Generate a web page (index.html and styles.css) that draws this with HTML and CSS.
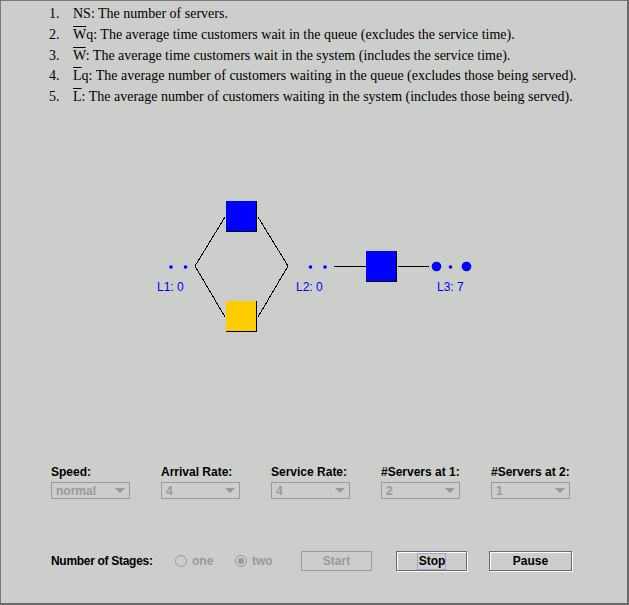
FILE: index.html
```html
<!DOCTYPE html>
<html>
<head>
<meta charset="utf-8">
<link rel="stylesheet" href="styles.css">
</head>
<body>
<div class="frame">
  <ol class="defs">
    <li><span class="num">1.</span><span class="txt">NS: The number of servers.</span></li>
    <li><span class="num">2.</span><span class="txt"><span class="ov">W</span>q: The average time customers wait in the queue (excludes the service time).</span></li>
    <li><span class="num">3.</span><span class="txt"><span class="ov">W</span>: The average time customers wait in the system (includes the service time).</span></li>
    <li><span class="num">4.</span><span class="txt"><span class="ov">L</span>q: The average number of customers waiting in the queue (excludes those being served).</span></li>
    <li><span class="num">5.</span><span class="txt"><span class="ov">L</span>: The average number of customers waiting in the system (includes those being served).</span></li>
  </ol>

  <svg class="diagram" width="627" height="240" viewBox="1 110 627 240" xmlns="http://www.w3.org/2000/svg">
    <g stroke="#000" stroke-width="1" shape-rendering="crispEdges" fill="none">
      <polyline points="225,217 195,266 225,317"/>
      <polyline points="258,217 288,266 258,317"/>
      <line x1="334" y1="266.5" x2="366" y2="266.5"/>
      <line x1="398" y1="266.5" x2="429" y2="266.5"/>
    </g>
    <g shape-rendering="crispEdges">
      <rect x="226" y="201" width="31" height="31" fill="#000"/>
      <rect x="226" y="201" width="30" height="30" fill="#0000ff"/>
      <rect x="226" y="301" width="31" height="31" fill="#000"/>
      <rect x="226" y="301" width="30" height="30" fill="#ffcc00"/>
      <rect x="366" y="251" width="31" height="31" fill="#000"/>
      <rect x="366" y="251" width="30" height="30" fill="#0000ff"/>
    </g>
    <g fill="#0000ff">
      <circle cx="171" cy="267" r="1.8"/>
      <circle cx="185.5" cy="267" r="1.8"/>
      <circle cx="310.5" cy="267" r="1.8"/>
      <circle cx="325" cy="267" r="1.8"/>
      <circle cx="436.5" cy="266.5" r="4.8"/>
      <circle cx="450.5" cy="267" r="1.8"/>
      <circle cx="466.5" cy="266.5" r="4.8"/>
    </g>
    <g class="lbl" fill="#0000ff">
      <text x="157" y="291">L1: 0</text>
      <text x="296" y="291">L2: 0</text>
      <text x="437" y="291">L3: 7</text>
    </g>
  </svg>

  <div class="params">
    <div class="param">
      <div class="plabel">Speed:</div>
      <div class="combo"><span>normal</span><i class="arrow"></i></div>
    </div>
    <div class="param">
      <div class="plabel">Arrival Rate:</div>
      <div class="combo"><span>4</span><i class="arrow"></i></div>
    </div>
    <div class="param">
      <div class="plabel">Service Rate:</div>
      <div class="combo"><span>4</span><i class="arrow"></i></div>
    </div>
    <div class="param">
      <div class="plabel">#Servers at 1:</div>
      <div class="combo"><span>2</span><i class="arrow"></i></div>
    </div>
    <div class="param">
      <div class="plabel">#Servers at 2:</div>
      <div class="combo"><span>1</span><i class="arrow"></i></div>
    </div>
  </div>

  <div class="stages">
    <div class="slabel">Number of Stages:</div>
    <div class="radio"><i class="circle"></i><span>one</span></div>
    <div class="radio two"><i class="circle on"></i><span>two</span></div>
    <div class="btn disabled start">Start</div>
    <div class="btn stop"><span class="focus">Stop</span></div>
    <div class="btn pause">Pause</div>
  </div>
</div>
</body>
</html>
```

FILE: styles.css
```css
html, body {
  margin: 0;
  padding: 0;
  background: #cccecb;
}

.frame {
  width: 629px;
  height: 605px;
  box-sizing: border-box;
  background: #cccecb;
  border-top: 1px solid #7a7a7a;
  border-left: 1px solid #7a7a7a;
  border-right: 2px solid #6a6a6a;
  border-bottom: 2px solid #6a6a6a;
  overflow: hidden;
}

.defs {
  list-style: none;
  margin: 0;
  padding: 3px 0 0 48px;
  height: 109px;
  box-sizing: border-box;
  font-family: "Liberation Serif", "Times New Roman", serif;
  font-size: 14px;
  color: #000;
}

.defs li {
  display: flex;
  height: 20.75px;
  line-height: 20.75px;
  white-space: nowrap;
}

.num {
  width: 24px;
  flex: none;
}

.ov {
  text-decoration: overline;
}

.diagram {
  display: block;
}

.lbl text {
  font-family: "Liberation Sans", Arial, sans-serif;
  font-size: 12px;
}

.params {
  display: flex;
  padding: 115px 0 0 50px;
  font-family: "Liberation Sans", Arial, sans-serif;
  font-size: 12px;
}

.param {
  width: 110px;
  flex: none;
}

.plabel {
  font-weight: bold;
  color: #000;
  height: 15px;
  line-height: 15px;
  margin-bottom: 2px;
}

.combo {
  width: 79px;
  height: 17px;
  box-sizing: border-box;
  border: 1px solid #9a9a9a;
  display: flex;
  align-items: center;
  justify-content: space-between;
  padding: 0 3px 0 4px;
  color: #999999;
  font-weight: bold;
}

.arrow {
  width: 0;
  height: 0;
  border-left: 5px solid transparent;
  border-right: 5px solid transparent;
  border-top: 5px solid #999999;
  margin-right: 1px;
}

.stages {
  display: flex;
  align-items: center;
  padding: 52px 0 0 50px;
  height: 20px;
  font-family: "Liberation Sans", Arial, sans-serif;
  font-size: 12px;
  font-weight: bold;
}

.slabel {
  width: 124px;
  flex: none;
  color: #000;
  letter-spacing: -0.3px;
}

.radio {
  display: flex;
  align-items: center;
  color: #999999;
  width: 60px;
  flex: none;
}

.circle {
  width: 12px;
  height: 12px;
  box-sizing: border-box;
  border: 1px solid #999999;
  border-radius: 50%;
  margin-right: 5px;
  position: relative;
  background: #cccecb;
}

.circle.on::after {
  content: "";
  position: absolute;
  left: 2px;
  top: 2px;
  width: 6px;
  height: 6px;
  border-radius: 50%;
  background: #999999;
}

.btn {
  height: 20px;
  box-sizing: border-box;
  display: flex;
  align-items: center;
  justify-content: center;
  flex: none;
  color: #000;
  border: 1px solid #6b6b6b;
  box-shadow: 1px 1px 0 #ffffff, inset 1px 1px 0 #ffffff;
}

.btn.disabled {
  color: #999999;
  border-color: #9a9a9a;
  box-shadow: none;
}

.start {
  width: 71px;
  margin-left: 6px;
}

.stop {
  width: 71px;
  margin-left: 24px;
}

.pause {
  width: 83px;
  margin-left: 22px;
}

.focus {
  border: 1px solid #a3a3d6;
  padding: 1px 0 1px 1px;
  line-height: 13px;
}
```
